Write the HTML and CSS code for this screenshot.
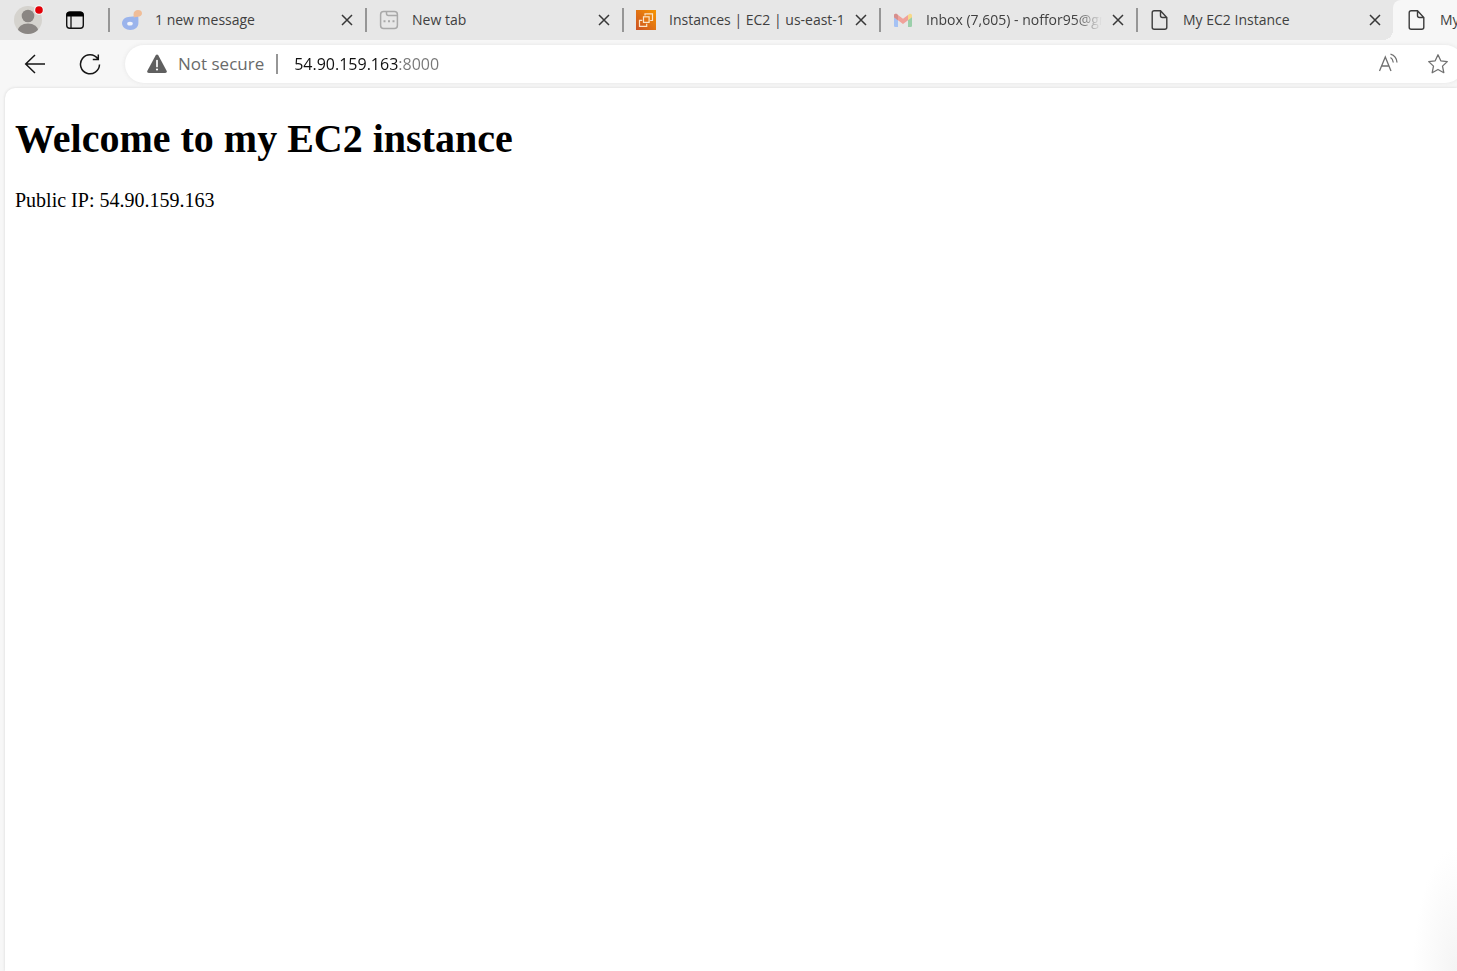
FILE: index.html
```html
<!DOCTYPE html>
<html lang="en">
<head>
<meta charset="utf-8">
<meta name="viewport" content="width=device-width, initial-scale=1">
<title>My EC2 Instance</title>
<link rel="stylesheet" href="styles.css">
</head>
<body>
<div class="browser">
  <header class="tab-strip">
    <button class="profile" type="button" aria-label="Profile">
      <svg width="32" height="32" viewBox="0 0 32 32"><defs><clipPath id="face"><circle cx="16" cy="16" r="14"/></clipPath></defs><circle cx="16" cy="16" r="14" fill="#d5d3ce"/><g clip-path="url(#face)" fill="#8a8683"><circle cx="16" cy="12" r="6.3"/><ellipse cx="16" cy="27.5" rx="10.5" ry="8"/></g><circle cx="27" cy="6" r="5" fill="#f3f3f3"/><circle cx="27" cy="6" r="3.8" fill="#e30008"/></svg>
    </button>
    <button class="workspace" type="button" aria-label="Tab actions">
      <svg width="20" height="20" viewBox="0 0 20 20"><rect x="1.7" y="2.2" width="16.6" height="16" rx="3" fill="none" stroke="#111" stroke-width="1.4"/><path d="M1.5 6.5V5a3.5 3.5 0 0 1 3.500-3.500h10A3.500 3.500 0 0 1 18.500 5v1.500z" fill="#000"/><path d="M6 6v12" stroke="#111" stroke-width="1.300"/></svg>
    </button>
    <nav class="tabs" aria-label="Tabs">
      <div class="tab">
        <svg class="favicon" width="20" height="20" viewBox="0 0 20 20"><path d="M11 6.500C13.500 5.500 16 5.500 16 5.500c.6 2.500.4 4.500.4 7.500 0 4-3.200 7-8 7S0 17 0 13.300 3.600 6.800 8 6.800z" fill="#9bb4ec"/><ellipse cx="8" cy="13.700" rx="2.800" ry="1.900" fill="#f3f5fb"/><path d="M11.500 4.500C11.500 1.500 13.500 0 16 0s4 1.200 4 3.300-1.800 3.500-4 3.500c-1.500 0-3 .2-4.200.7z" fill="#f0bd98"/></svg>
        <button class="title" type="button">1 new message</button>
        <button class="close" type="button" aria-label="Close tab"><svg width="12" height="12" viewBox="0 0 12 12"><path d="M1 1l10 10M11 1L1 11"/></svg></button>
      </div>
      <div class="tab">
        <svg class="favicon" width="20" height="20" viewBox="0 0 20 20" fill="none" stroke="#a9a9a9" stroke-width="1.500"><rect x="1.600" y="1.600" width="16.800" height="16.800" rx="3"/><path d="M7.500 1.600v2q0 2 2 2h8.900"/><path d="M4.500 11.300h2M9 11.300h2M13.500 11.300h2" stroke-width="2"/></svg>
        <button class="title" type="button">New tab</button>
        <button class="close" type="button" aria-label="Close tab"><svg width="12" height="12" viewBox="0 0 12 12"><path d="M1 1l10 10M11 1L1 11"/></svg></button>
      </div>
      <div class="tab">
        <svg class="favicon" width="20" height="20" viewBox="0 0 20 20" fill="none" stroke="#fbe4c8" stroke-width="1.200"><defs><linearGradient id="aws" x1="0" y1="1" x2="1" y2="0"><stop offset="0" stop-color="#cb5125"/><stop offset="1" stop-color="#f79500"/></linearGradient></defs><path d="M0 0h20v20H0z" fill="url(#aws)" stroke="none"/><rect x="7.500" y="6.800" width="5.600" height="5.600"/><path d="M9 5.500V3.800h7.500v6.700h-2.300M6.300 8.800M6.300 10.300H3.500v6h7.200v-2.600"/></svg>
        <button class="title" type="button">Instances | EC2 | us-east-1</button>
        <button class="close" type="button" aria-label="Close tab"><svg width="12" height="12" viewBox="0 0 12 12"><path d="M1 1l10 10M11 1L1 11"/></svg></button>
      </div>
      <div class="tab">
        <svg class="favicon" width="20" height="20" viewBox="0 0 20 20"><path d="M1 5.500l4 3V17H2.300Q1 17 1 15.700z" fill="#a5c2f4"/><path d="M15 8.500l4-3v10.200q0 1.300-1.300 1.300H15z" fill="#9bcfaa"/><path d="M15 5l1-.8c1.400-1 3-.2 3 1.300v1.800l-4 3z" fill="#f8d98a"/><path d="M1 7.300V5.500C1 4 2.600 3.200 4 4.200l6 4.600L15 5v5.300L10 14l-5-3.700z" fill="#f0a19a"/><path d="M1 7.300V5.500C1 4 2.600 3.200 4 4.200l1 .8v5.300z" fill="#d58f8d"/></svg>
        <button class="title long" type="button">Inbox (7,605) - noffor95@gmail.com</button>
        <button class="close" type="button" aria-label="Close tab"><svg width="12" height="12" viewBox="0 0 12 12"><path d="M1 1l10 10M11 1L1 11"/></svg></button>
      </div>
      <div class="tab">
        <svg class="favicon" width="20" height="20" viewBox="0 0 20 20" fill="none" stroke="#3c3c3c" stroke-width="1.400"><path d="M10.500.7H4.200Q2.200.7 2.200 2.700v14.600q0 2 2 2h10.600q2 0 2-2V7.500zM10.500.7v4.800q0 2 2 2h4.300"/></svg>
        <button class="title" type="button">My EC2 Instance</button>
        <button class="close" type="button" aria-label="Close tab"><svg width="12" height="12" viewBox="0 0 12 12"><path d="M1 1l10 10M11 1L1 11"/></svg></button>
      </div>
      <div class="tab active">
        <svg class="favicon" width="20" height="20" viewBox="0 0 20 20" fill="none" stroke="#3c3c3c" stroke-width="1.400"><path d="M10.500.7H4.200Q2.200.7 2.200 2.700v14.600q0 2 2 2h10.600q2 0 2-2V7.500zM10.500.7v4.800q0 2 2 2h4.300"/></svg>
        <button class="title" type="button" aria-current="page">My EC2 Instance</button>
      </div>
    </nav>
  </header>
  <div class="toolbar">
    <button class="nav-button" type="button" aria-label="Back"><svg width="22" height="22" viewBox="0 0 22 22"><path d="M21 11H2M11 2L1.700 11l9.300 9"/></svg></button>
    <button class="nav-button" type="button" aria-label="Refresh"><svg width="22" height="22" viewBox="0 0 22 22"><path d="M20.500 11.500A9.500 9.500 0 1 1 18.800 5.800M19.300 1.500v5h-5.500"/></svg></button>
    <form class="address">
      <button class="security" type="button"><svg width="22" height="20" viewBox="0 0 22 20"><path d="M9.600 1.500q1.400-2.200 2.800 0l8.200 15.200q1 2.300-1.400 2.300H2.800q-2.400 0-1.400-2.300z" fill="#5f5f5f"/><path d="M11 6.500v6" stroke="#fff" stroke-width="1.700" stroke-linecap="round"/><circle cx="11" cy="15.500" r="1.100" fill="#fff"/></svg>Not secure</button>
      <input class="url" type="text" aria-label="Address" value="54.90.159.163:8000" spellcheck="false">
      <button class="action" type="button" aria-label="Read aloud"><svg width="22" height="22" viewBox="0 0 22 22"><path d="M1.500 18L7.300 4 13 18M3.500 13h7.500M12.500 4.500Q15 6 15.300 9.500M12.500 1.200Q18.500 3 19 9.500"/></svg></button>
      <button class="action" type="button" aria-label="Add to favorites"><svg width="22" height="22" viewBox="0 0 22 22"><path d="M11 1.800l2.800 6 6.500.8-4.800 4.500 1.300 6.600-5.800-3.200-5.800 3.200 1.300-6.600L1.700 8.600l6.500-.8z" stroke-linejoin="round"/></svg></button>
    </form>
  </div>
  <main class="page">
    <h1>Welcome to my EC2 instance</h1>
    <p>Public IP: 54.90.159.163</p>
  </main>
</div>
</body>
</html>
```
FILE: styles.css
```css
* { box-sizing: border-box; }

body {
  margin: 0;
  overflow: hidden;
  background: #f7f7f7;
}

button {
  flex: none;
  margin: 0;
  padding: 0;
  border: 0;
  background: none;
  color: inherit;
  font: inherit;
}

svg { display: block; flex: none; }

.browser {
  display: flex;
  flex-direction: column;
  min-height: 100vh;
  font-family: "Open Sans", "Noto Sans", sans-serif;
}

.tab-strip {
  display: flex;
  align-items: center;
  height: 40px;
  padding-left: 12px;
  overflow: hidden;
  background: #e7e7e7;
  color: #3f3f3f;
  font-size: 14px;
}

.workspace { margin-left: 21px; }

.tabs {
  display: flex;
  flex: 1;
  align-self: stretch;
  min-width: 0;
  margin-left: 23px;
}

.tab {
  display: flex;
  flex: none;
  align-items: center;
  width: 257px;
  padding: 0 6px 0 14px;
  background: linear-gradient(#969696, #969696) left center / 2px 24px no-repeat;
}

.title {
  flex: 1;
  min-width: 0;
  margin: 0 4px 0 13px;
  overflow: hidden;
  line-height: 20px;
  text-align: left;
  white-space: nowrap;
}

.long { mask-image: linear-gradient(to left, transparent, #000 28px); }

.close { padding: 6px; }

.close svg {
  fill: none;
  stroke: #383838;
  stroke-width: 1.5;
}

.active {
  position: relative;
  border-radius: 8px 0 0 0;
  background: #f7f7f7;
}

.active::before {
  content: "";
  position: absolute;
  bottom: 0;
  left: -10px;
  width: 10px;
  height: 10px;
  background: radial-gradient(circle at 0 0, transparent 10px, #f7f7f7 10px);
}

.toolbar {
  display: flex;
  align-items: center;
  height: 48px;
  padding-left: 24px;
  overflow: hidden;
}

.nav-button { margin-right: 33px; }

.nav-button svg {
  fill: none;
  stroke: #161616;
  stroke-width: 1.5;
}

.address {
  display: flex;
  flex: 1;
  align-items: center;
  height: 38px;
  margin: 0 -7px 0 -9px;
  padding: 0 15px 0 21px;
  border-radius: 19px;
  background: #fff;
  box-shadow: 0 0 4px #e4e4e4;
  color: #6a6a6a;
  font-size: 17px;
}

.security {
  display: flex;
  align-items: center;
  gap: 10px;
  padding-right: 12px;
  border-right: 2px solid #969696;
  line-height: 20px;
}

.url {
  flex: 1;
  min-width: 0;
  margin-left: 16px;
  padding: 0;
  border: 0;
  outline: 0;
  background: linear-gradient(to right, #111 105px, #777 105px);
  background-clip: text;
  color: transparent;
  caret-color: #111;
  font: inherit;
  font-size: 16px;
}

.action { margin-left: 27px; }

.action svg {
  fill: none;
  stroke: #707070;
  stroke-width: 1.3;
}

.page {
  flex: 1;
  margin-left: 5px;
  padding: 0 10px;
  border-top-left-radius: 10px;
  background: radial-gradient(ellipse 44px 124px at 100% 100%, #f4f4f4, #fff) #fff;
  box-shadow: 0 0 3px #d5d5d5;
  color: #000;
  font-family: "Liberation Serif", "Times New Roman", serif;
  font-size: 20px;
}

.page h1 {
  margin: 28px 0 27px;
  font-size: 40px;
  line-height: 46px;
}

.page p {
  margin: 0;
  line-height: 22px;
}
```
